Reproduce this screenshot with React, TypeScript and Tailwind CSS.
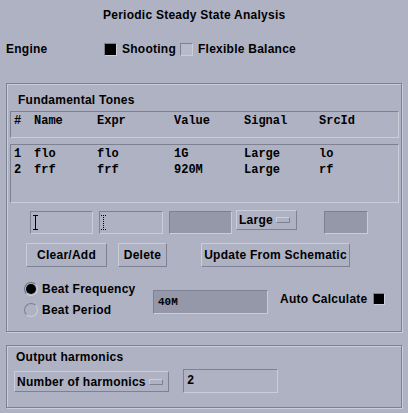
import React from "react";

const BG = "bg-[#aeb2c3]";

function Sunken({ className = "", children }: { className?: string; children?: React.ReactNode }) {
  return (
    <div
      className={`box-border border border-t-[#7e8191] border-l-[#7e8191] border-b-[#caced9] border-r-[#caced9] ${className}`}
    >
      {children}
    </div>
  );
}

function Raised({ className = "", children }: { className?: string; children?: React.ReactNode }) {
  return (
    <div
      className={`box-border border border-t-[#caced9] border-l-[#caced9] border-b-[#7e8191] border-r-[#7e8191] ${className}`}
    >
      {children}
    </div>
  );
}

function Frame({ className = "", children }: { className?: string; children?: React.ReactNode }) {
  return (
    <div
      className={`box-border border border-[#7e8191] shadow-[inset_1px_1px_0_#caced9,1px_1px_0_#caced9] ${className}`}
    >
      {children}
    </div>
  );
}

function Indicator() {
  return <Raised className="w-[14px] h-[6px]" />;
}

const mono = "font-['Liberation_Mono',monospace] font-bold text-[12px] text-black tracking-normal";

function Row({ cells }: { cells: string[] }) {
  const widths = ["w-[20px]", "w-[63px]", "w-[77px]", "w-[70px]", "w-[75px]", "w-[60px]"];
  return (
    <div className={`flex h-[16px] leading-[16px] ${mono} whitespace-pre`}>
      {cells.map((c, i) => (
        <span key={i} className={widths[i]}>
          {c}
        </span>
      ))}
    </div>
  );
}

export default function App() {
  return (
    <div
      className={`w-[408px] h-[413px] ${BG} overflow-hidden text-black font-['Liberation_Sans',Arial,sans-serif] font-bold text-[12px] tracking-[0.25px]`}
    >
      {/* title */}
      <div className="h-[30px] flex items-center pl-[103px]">Periodic Steady State Analysis</div>

      {/* engine */}
      <div className="h-[38px] flex items-center pl-[6px]">
        <span className="w-[98px]">Engine</span>
        <Sunken className="w-[13px] h-[13px] bg-black border-t-[#6f7282] border-l-[#6f7282]" />
        <span className="ml-[5px] w-[58px]">Shooting</span>
        <Sunken className="w-[13px] h-[13px] bg-[#b6bacb]" />
        <span className="ml-[5px]">Flexible Balance</span>
      </div>

      {/* Fundamental tones frame */}
      <Frame className="mt-[15px] mx-[6px] h-[249px] flex flex-col">
        <div className="mt-[8px] h-[16px] leading-[16px] pl-[11px]">Fundamental Tones</div>

        <Sunken className="mt-[3px] ml-[3px] w-[389px] h-[27px] pl-[3px] pt-[1px]">
          <Row cells={["#", "Name", "Expr", "Value", "Signal", "SrcId"]} />
        </Sunken>

        <Sunken className="mt-[6px] ml-[3px] w-[389px] h-[59px] pl-[3px] pt-[1px]">
          <Row cells={["1", "flo", "flo", "1G", "Large", "lo"]} />
          <Row cells={["2", "frf", "frf", "920M", "Large", "rf"]} />
        </Sunken>

        {/* input fields */}
        <div className="mt-[7px] h-[24px] flex items-start pl-[23px]">
          <Sunken className="mt-[1px] w-[63px] h-[23px] relative">
            <svg className="absolute left-[2px] top-[3px]" width="5" height="15" viewBox="0 0 5 15">
              <path d="M0 0.5H5M0 14.5H5M2.5 0V15" stroke="black" strokeWidth="1" fill="none" />
            </svg>
          </Sunken>
          <Sunken className="mt-[1px] ml-[6px] w-[64px] h-[23px] relative">
            <svg className="absolute left-[1px] top-[3px]" width="5" height="15" viewBox="0 0 5 15">
              <path d="M0 0.5H5M0 14.5H5M2.5 0V15" stroke="black" strokeWidth="1" strokeDasharray="1 1" fill="none" />
            </svg>
          </Sunken>
          <Sunken className="mt-[1px] ml-[6px] w-[63px] h-[23px] bg-[#9498a8]" />
          <Raised className="ml-[4px] w-[61px] h-[20px] flex items-center pl-[2px]">
            <span>Large</span>
            <span className="ml-[3px]">
              <Indicator />
            </span>
          </Raised>
          <Sunken className="mt-[1px] ml-[27px] w-[44px] h-[23px] bg-[#9498a8]" />
        </div>

        {/* buttons */}
        <div className="mt-[9px] h-[24px] flex pl-[19px]">
          <Raised className="w-[81px] h-[24px] flex items-center justify-center">Clear/Add</Raised>
          <Raised className="ml-[11px] w-[49px] h-[24px] flex items-center justify-center">Delete</Raised>
          <Raised className="ml-[34px] w-[149px] h-[24px] flex items-center justify-center">
            Update From Schematic
          </Raised>
        </div>

        {/* beat */}
        <div className="mt-[11px] h-[42px] flex items-start pl-[17px]">
          <div className="flex flex-col w-[129px]">
            <div className="h-[21px] flex items-center">
              <div className="w-[14px] h-[14px] rounded-full box-border border border-t-[#6f7282] border-l-[#6f7282] border-b-[#caced9] border-r-[#caced9] flex items-center justify-center">
                <div className="w-[10px] h-[10px] rounded-full bg-black" />
              </div>
              <span className="ml-[4px]">Beat Frequency</span>
            </div>
            <div className="h-[21px] flex items-center">
              <div className="w-[14px] h-[14px] rounded-full box-border border border-t-[#7e8191] border-l-[#7e8191] border-b-[#caced9] border-r-[#caced9]" />
              <span className="ml-[4px]">Beat Period</span>
            </div>
          </div>
          <Sunken className="mt-[12px] w-[115px] h-[24px] bg-[#9498a8] pl-[4px] flex items-center">
            <span className="font-['Liberation_Mono',monospace] font-bold text-[11px] tracking-normal">40M</span>
          </Sunken>
          <div className="self-center ml-[12px] flex items-center">
            <span>Auto Calculate</span>
            <Sunken className="ml-[5px] w-[12px] h-[12px] bg-black border-t-[#6f7282] border-l-[#6f7282]" />
          </div>
        </div>
      </Frame>

      {/* Output harmonics frame */}
      <Frame className="mt-[13px] mx-[6px] h-[63px] flex flex-col">
        <div className="mt-[3px] h-[16px] leading-[16px] pl-[9px]">Output harmonics</div>
        <div className="mt-[4px] flex items-start pl-[7px]">
          <Raised className="mt-[2px] w-[155px] h-[21px] flex items-center pl-[2px]">
            <span>Number of harmonics</span>
            <span className="ml-[3px]">
              <Indicator />
            </span>
          </Raised>
          <Sunken className="ml-[14px] w-[95px] h-[24px] pl-[3px] flex items-center relative">
            <span className="font-['Liberation_Mono',monospace] font-bold text-[12px] tracking-normal">2</span>
          </Sunken>
        </div>
      </Frame>
    </div>
  );
}
